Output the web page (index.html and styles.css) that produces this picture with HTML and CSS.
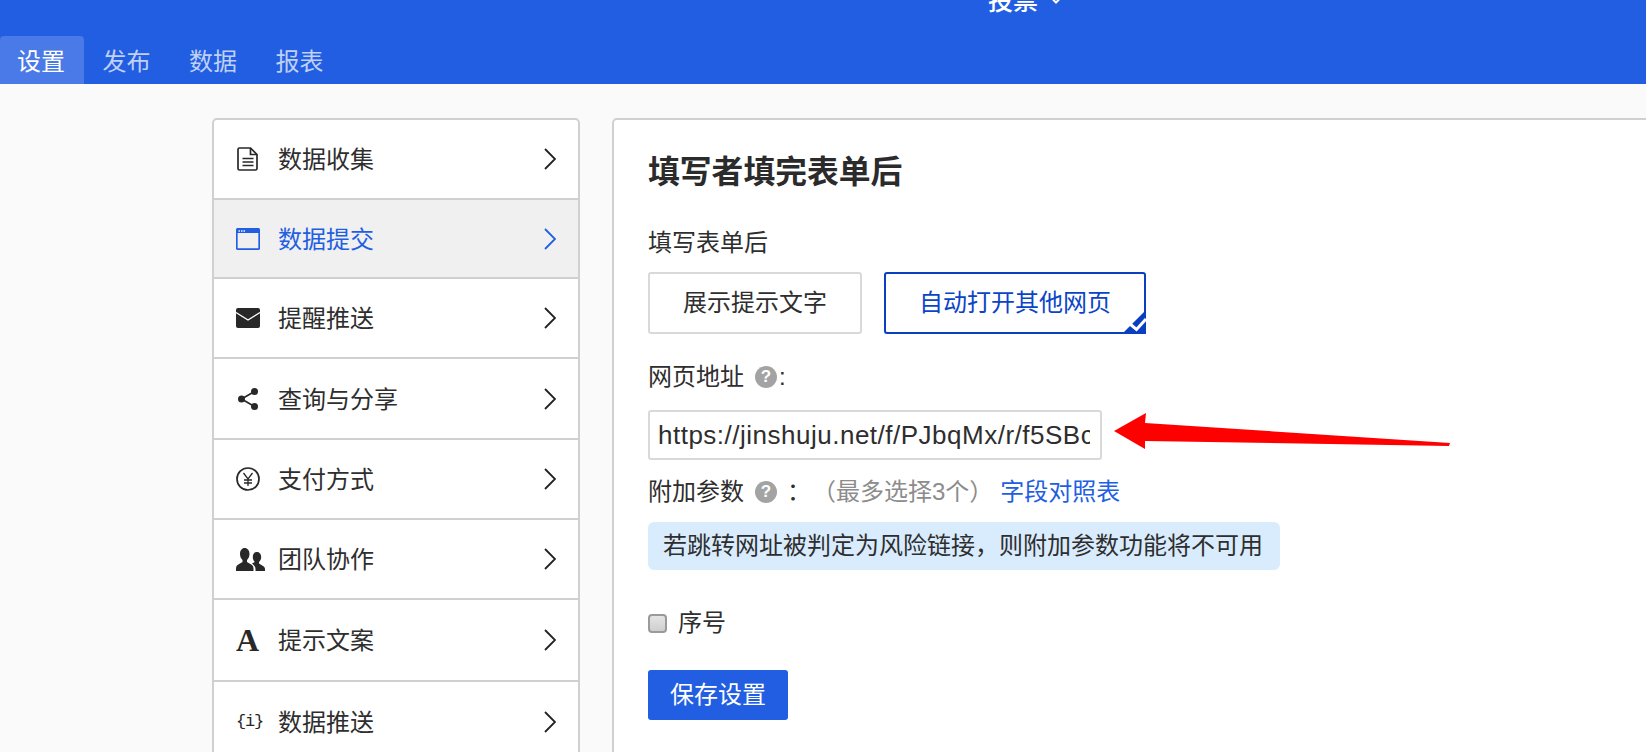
FILE: index.html
```html
<!DOCTYPE html>
<html lang="zh">
<head>
<meta charset="utf-8">
<title>设置</title>
<link rel="stylesheet" href="styles.css">
</head>
<body>
<header class="header">
  <div class="topbar">
    <div class="top-item"><span>投票</span>
      <svg class="top-caret" viewBox="0 0 10 6"><path d="M1 0.5 5 4.5 9 0.5"/></svg>
    </div>
  </div>
  <nav class="tabs">
    <a class="tab tab-active">设置</a>
    <a class="tab">发布</a>
    <a class="tab">数据</a>
    <a class="tab">报表</a>
  </nav>
</header>
<main class="page">
  <aside class="side">
    <div class="row">
      <span class="ico"><svg class="svg-doc" viewBox="0 0 22 24"><path class="ln" d="M2.500 1h11l6.500 6.500V21.500a1.500 1.500 0 0 1-1.500 1.500H2.500A1.500 1.500 0 0 1 1 21.500V2.500A1.500 1.500 0 0 1 2.500 1z"/><path class="ln" d="M13.500 1v6.500H20M5.500 11.500h11M5.500 15h11M5.500 18.500h11"/></svg></span>
      <span class="row-text">数据收集</span>
      <svg class="chev" viewBox="0 0 12 22"><path d="M1 1 11 11 1 21"/></svg>
    </div>
    <div class="row row-active">
      <span class="ico"><svg class="svg-win" viewBox="0 0 24 22"><rect class="ln" x=".8" y=".8" width="22.400" height="20.400" rx="1"/><path class="fl" d="M1 1h22v4H1z"/><path class="dots" d="M2.500 2.300h1.500v1.500H2.500zM5 2.300h1.500v1.500H5zM7.500 2.300H9v1.500H7.500z"/></svg></span>
      <span class="row-text">数据提交</span>
      <svg class="chev" viewBox="0 0 12 22"><path d="M1 1 11 11 1 21"/></svg>
    </div>
    <div class="row">
      <span class="ico"><svg class="svg-mail" viewBox="0 0 24 20"><rect class="fl" width="24" height="20" rx="2"/><path class="mail-v" d="M0 4.500 12 12 24 4.500"/></svg></span>
      <span class="row-text">提醒推送</span>
      <svg class="chev" viewBox="0 0 12 22"><path d="M1 1 11 11 1 21"/></svg>
    </div>
    <div class="row">
      <span class="ico"><svg class="svg-share" viewBox="0 0 20 22"><circle class="fl" cx="16.500" cy="3.500" r="3.500"/><circle class="fl" cx="3.500" cy="11" r="3.500"/><circle class="fl" cx="16.500" cy="18.500" r="3.500"/><path class="ln" d="M16.500 3.500 3.500 11 16.500 18.500"/></svg></span>
      <span class="row-text">查询与分享</span>
      <svg class="chev" viewBox="0 0 12 22"><path d="M1 1 11 11 1 21"/></svg>
    </div>
    <div class="row">
      <span class="ico"><svg class="svg-yen" viewBox="0 0 24 24"><circle class="ln" cx="12" cy="12" r="11"/><path class="ln-thin" d="M7.500 6 12 12 16.500 6M12 12v7M8 13h8M8 16h8"/></svg></span>
      <span class="row-text">支付方式</span>
      <svg class="chev" viewBox="0 0 12 22"><path d="M1 1 11 11 1 21"/></svg>
    </div>
    <div class="row">
      <span class="ico"><svg class="svg-users" viewBox="0 0 29 23"><path class="fl" d="M8.500 0c3 0 5 2.500 5 6 0 2.500-1 4.500-2.500 6v2l5 3c1 .7 1.500 2 1.500 4v2H0v-2c0-2 .5-3.300 1.500-4l5-3v-2C5 10.500 4 8.500 4 6c0-3.500 2-6 4.500-6z"/><path class="fl" d="M21 4c2.500 0 4.200 2 4.200 5 0 2-.8 3.800-2.200 5v1.500l4 2.500c1 .7 2 1.800 2 3v2H19.500v-2c0-2.500-1.500-4-3.500-5.500l2.800-1.500V14c-1.300-1.200-2-3-2-5 0-3 1.700-5 4.200-5z"/></svg></span>
      <span class="row-text">团队协作</span>
      <svg class="chev" viewBox="0 0 12 22"><path d="M1 1 11 11 1 21"/></svg>
    </div>
    <div class="row">
      <span class="ico ico-a">A</span>
      <span class="row-text">提示文案</span>
      <svg class="chev" viewBox="0 0 12 22"><path d="M1 1 11 11 1 21"/></svg>
    </div>
    <div class="row">
      <span class="ico ico-i">{i}</span>
      <span class="row-text">数据推送</span>
      <svg class="chev" viewBox="0 0 12 22"><path d="M1 1 11 11 1 21"/></svg>
    </div>
  </aside>
  <section class="card">
    <h1 class="title">填写者填完表单后</h1>
    <div class="label label-first">填写表单后</div>
    <div class="options">
      <div class="opt opt-plain">展示提示文字</div>
      <div class="opt opt-on">自动打开其他网页
        <svg class="tick" viewBox="0 0 24 24"><path class="tick-bg" d="M24 0V24H0z"/><path class="tick-mark" d="M8 14 14.500 19.500 24 9"/></svg>
      </div>
    </div>
    <div class="label label-url">网页地址<span class="help">?</span><span class="colon">:</span></div>
    <input class="url" type="text" readonly value="https://jinshuju.net/f/PJbqMx/r/f5SBc">
    <div class="label label-extra">附加参数<span class="help">?</span><span class="colon-wide">：</span><span class="hint">（最多选择3个）</span><a class="link">字段对照表</a></div>
    <div class="note">若跳转网址被判定为风险链接，则附加参数功能将不可用</div>
    <label class="check"><input class="box" type="checkbox"><span>序号</span></label>
    <button class="save" type="button">保存设置</button>
    <svg class="arrow" viewBox="0 0 340 40"><path d="M0 18 32 0 31 10 336 30 335 33 31 28 31 36z"/></svg>
  </section>
</main>
</body>
</html>
```

FILE: styles.css
```css
* { box-sizing: border-box; }
html, body { margin: 0; height: 752px; overflow: hidden; }
body {
  background: #fafafa;
  color: #2e2e2e;
  font-family: "Liberation Sans", "Noto Sans CJK SC", sans-serif;
  font-size: 24px;
  line-height: 32px;
}
.header { height: 84px; background: #225ee2; color: #fff; }
.topbar { height: 36px; padding-left: 988px; overflow: hidden; }
.top-item { display: flex; align-items: center; margin-top: -15px; height: 32px; font-size: 25px; font-weight: 500; }
.top-caret { width: 10px; height: 6px; margin-left: 13px; fill: none; stroke: #fff; stroke-width: 2; }
.tabs { display: flex; height: 48px; gap: 2.5px; }
.tab { width: 84px; padding-right: 4px; text-align: center; line-height: 52px; color: rgba(255,255,255,.72); border-radius: 4px 4px 0 0; }
.tab-active { background: #4a79e8; color: #fff; padding-right: 2px; }

.page { display: flex; gap: 32px; padding: 34px 0 0 212px; }
.side {
  flex: 0 0 368px;
  background: #fff;
  border: 2px solid #d0d0d0;
  border-radius: 5px 5px 0 0;
  height: 660px;
}
.row {
  display: flex;
  align-items: center;
  height: 80px;
  padding: 0 22px;
  border-bottom: 2px solid #d0d0d0;
}
.row:nth-child(2) { height: 79px; }
.row:nth-child(4) { height: 81px; }
.row:nth-child(7) { height: 82px; }
.row:last-child { border-bottom: 0; }
.row-active { background: #f0f0f0; color: #225ee2; }
.ico { flex: 0 0 42px; display: flex; align-items: center; color: #282828; }
.row-active .ico { color: #225ee2; }
.row-text { flex: 1; margin-top: 2px; }
.chev { width: 12px; height: 22px; fill: none; stroke: #222; stroke-width: 1.8; }
.row-active .chev { stroke: #225ee2; }
.ln { fill: none; stroke: currentColor; stroke-width: 1.7; }
.ln-thin { fill: none; stroke: currentColor; stroke-width: 1.3; }
.fl { fill: currentColor; }
.dots { fill: #f0f0f0; }
.mail-v { fill: none; stroke: #fff; stroke-width: 1.4; }
.svg-doc { width: 22px; height: 24px; margin-left: 1px; }
.svg-win { width: 24px; height: 22px; }
.svg-mail { width: 24px; height: 20px; }
.svg-share { width: 20px; height: 22px; margin-left: 2px; }
.svg-yen { width: 24px; height: 24px; }
.svg-users { width: 29px; height: 23px; }
.ico-a { font-family: "Liberation Serif", serif; font-weight: 700; font-size: 32px; line-height: 32px; }
.ico-i { font-family: "Liberation Mono", monospace; font-size: 17px; letter-spacing: -1.2px; }

.card {
  flex: 1;
  margin-right: -10px;
  height: 660px;
  background: #fff;
  border: 2px solid #d0d0d0;
  border-radius: 5px 0 0 0;
  padding: 32px 0 0 34px;
  position: relative;
}
.title { margin: 0; font-size: 31.8px; line-height: 40px; font-weight: 700; color: #2b2b2b; }
.label { display: flex; align-items: center; }
.label-first { margin-top: 35px; margin-bottom: -1px; }
.options { display: flex; gap: 22px; margin-top: 14px; }
.opt { position: relative; display: flex; align-items: center; justify-content: center; height: 62px; border-radius: 3px; }
.opt-plain { width: 214px; border: 2px solid #d9d9d9; }
.opt-on { width: 262px; border: 2px solid #0a3fc2; color: #0a45c8; }
.tick { position: absolute; right: -2px; bottom: -2px; width: 24px; height: 24px; }
.tick-bg { fill: #0a3fc2; }
.tick-mark { fill: none; stroke: #fff; stroke-width: 3; }
.label-url { margin-top: 27px; }
.help {
  flex: none;
  width: 22px; height: 22px;
  margin-left: 11px;
  border-radius: 50%;
  background: #a3a3a3;
  color: #fff;
  font-size: 17px;
  font-weight: 700;
  line-height: 22px;
  text-align: center;
}
.colon { margin-left: 2px; }
.colon-wide { margin-left: 10px; }
.url {
  display: block;
  width: 454px;
  height: 50px;
  margin-top: 17px;
  padding: 0 10px 0 8px;
  border: 2px solid #d9d9d9;
  border-radius: 3px;
  background: #fff;
  color: #2e2e2e;
  font: inherit;
  font-size: 26px;
  letter-spacing: .5px;
  outline: none;
}
.label-extra { margin-top: 16px; }
.hint { color: #8c8c8c; margin-left: 1px; }
.link { color: #225ee2; margin-left: 7px; }
.note {
  width: 632px;
  height: 48px;
  margin-top: 14px;
  padding: 0 15px;
  border-radius: 6px;
  background: #d9ecfd;
  line-height: 48px;
}
.check { display: flex; align-items: center; gap: 11px; margin-top: 37px; }
.box {
  appearance: none;
  width: 19px; height: 19px;
  margin: 0;
  border: 2px solid #9a9a9a;
  border-radius: 4px;
  background: linear-gradient(#e4e4e4, #cfcfcf);
}
.save {
  display: block;
  width: 140px;
  height: 50px;
  margin-top: 31px;
  border: 0;
  border-radius: 3px;
  background: #225ee2;
  color: #fff;
  font: inherit;
}
.arrow { position: absolute; left: 500px; top: 293px; width: 340px; height: 40px; fill: #f00; }
```
